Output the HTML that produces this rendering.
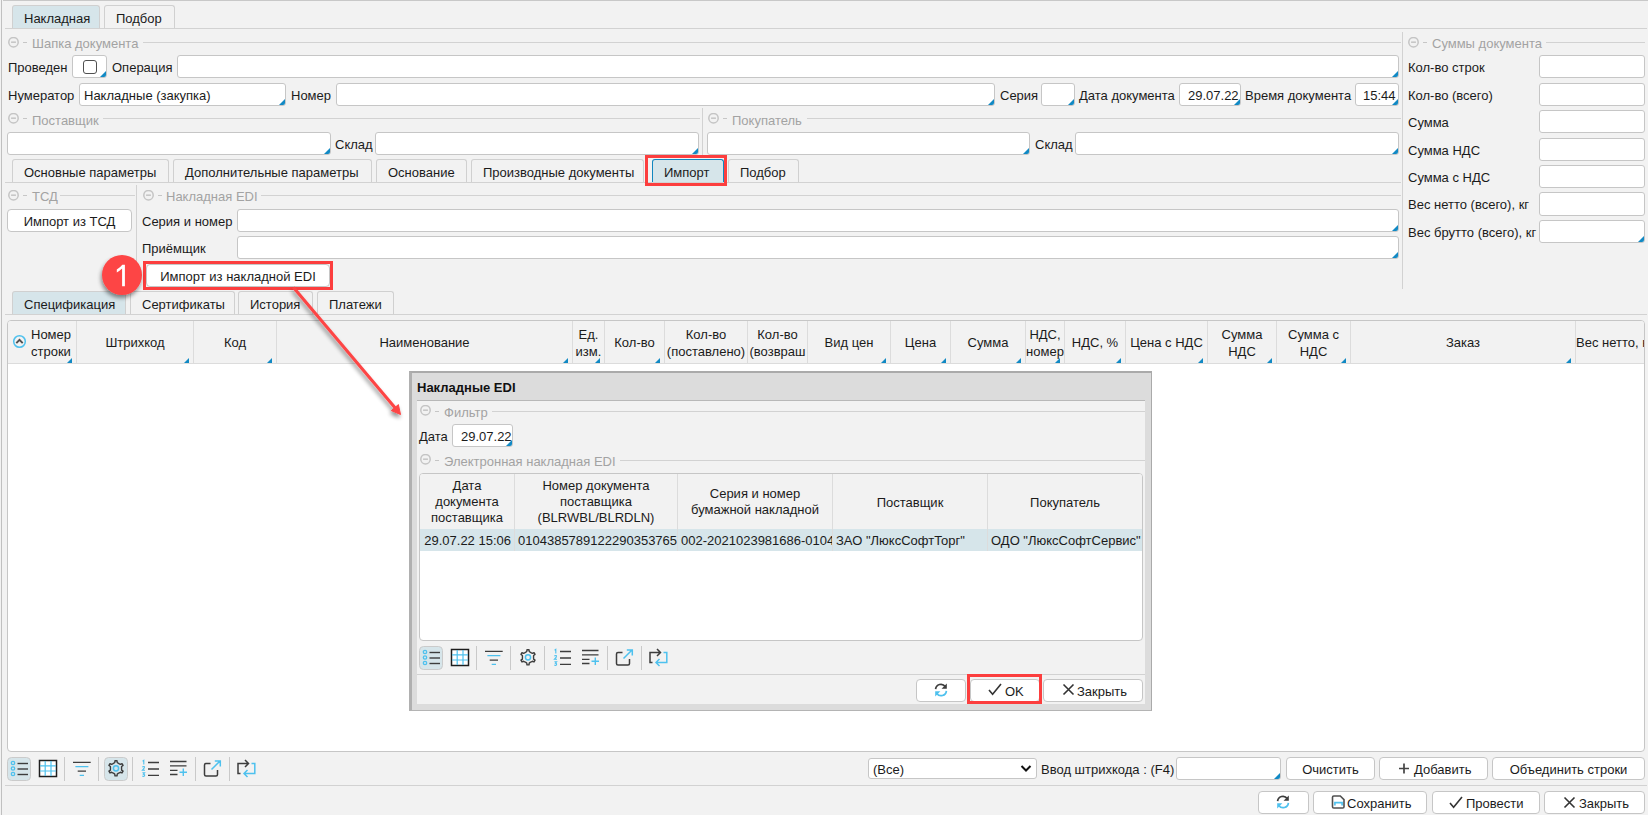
<!DOCTYPE html>
<html><head><meta charset="utf-8">
<style>
*{margin:0;padding:0;box-sizing:border-box}
html,body{width:1648px;height:815px;overflow:hidden;background:#f2f2f2;position:relative;font-family:"Liberation Sans",sans-serif;font-size:13px;color:#1b1b1b}
.a{position:absolute}
.t{position:absolute;white-space:nowrap;line-height:15px;font-size:13px}
.g{color:#a3a3a3}
.hl{position:absolute;height:1px;background:#d2d2d2}
.vl{position:absolute;width:1px;background:#d2d2d2}
.in{position:absolute;background:#fff;border:1px solid #c6c6c6;border-radius:3px;height:23px;overflow:hidden}
.c::after{content:"";position:absolute;right:0;bottom:0;width:0;height:0;border-style:solid;border-width:0 0 6px 6px;border-color:transparent transparent #1189c4 transparent}
.tab{position:absolute;border:1px solid #d0d0d0;border-bottom:none;border-radius:3px 3px 0 0;background:#f2f2f2;height:24px}
.tab.on{background:#d6e5ea}
.tab span{position:absolute;top:5px;left:11px;white-space:nowrap;line-height:15px}
.btn{position:absolute;background:#fff;border:1px solid #c6c6c6;border-radius:4px;height:23px;text-align:center;line-height:23px;white-space:nowrap}
.ico{position:absolute;width:11px;height:11px;border:1.6px solid #c4c4c4;border-radius:50%}
.ico::after{content:"";position:absolute;left:1.5px;top:3.1px;width:4.8px;height:1.6px;background:#c4c4c4}
.dash{position:absolute;width:4px;height:1px;background:#c6c6c6}
.red{position:absolute;border:3px solid #fc3e3e}
.gh{position:absolute;text-align:center;line-height:17px;white-space:nowrap;overflow:hidden}
.tri{position:absolute;width:0;height:0;border-style:solid;border-width:0 0 5px 5px;border-color:transparent transparent #1189c4 transparent}
.gh>div{display:flex;justify-content:safe center;padding:0 2px}
.mh{position:absolute;text-align:center;line-height:16px;white-space:nowrap}
.mc{position:absolute;top:59px;line-height:15px;white-space:nowrap;overflow:hidden;padding-left:3px}
.cn::after{content:"";position:absolute;right:1px;bottom:0;width:0;height:0;border-style:solid;border-width:0 0 5px 5px;border-color:transparent transparent #1189c4 transparent}
</style></head><body>
<!-- frame -->
<div class="a" style="left:1px;top:0;width:1px;height:815px;background:#c0c0c0"></div>
<div class="a" style="left:3px;top:0;width:1645px;height:1px;background:#c8c8c8"></div>

<!-- top tabs -->
<div class="tab on" style="left:12px;top:5px;width:88px"><span>Накладная</span></div>
<div class="tab" style="left:104px;top:5px;width:71px"><span>Подбор</span></div>
<div class="hl" style="left:5px;top:28px;width:1642px"></div>

<!-- header section -->
<svg class="a" style="left:8px;top:37px" width="12" height="12" viewBox="0 0 12 12"><circle cx="5.5" cy="5.2" r="4.7" fill="none" stroke="#c4c4c4" stroke-width="1.5"/><path d="M3.1,5.2H7.9" stroke="#c4c4c4" stroke-width="1.5"/></svg><div class="dash" style="left:23px;top:42px"></div>
<div class="t g" style="left:32px;top:36px">Шапка документа</div>
<div class="hl" style="left:143px;top:42px;width:1258px"></div>
<div class="vl" style="left:1402px;top:32px;height:257px"></div>

<div class="t" style="left:8px;top:60px">Проведен</div>
<div class="in c" style="left:72px;top:55px;width:35px"><div class="a" style="left:10px;top:4px;width:14px;height:14px;border:1.4px solid #505050;border-radius:3px"></div></div>
<div class="t" style="left:112px;top:60px">Операция</div>
<div class="in c" style="left:177px;top:55px;width:1222px"></div>

<div class="t" style="left:8px;top:88px">Нумератор</div>
<div class="in c" style="left:79px;top:83px;width:207px"><div class="t" style="left:4px;top:4px">Накладные (закупка)</div></div>
<div class="t" style="left:291px;top:88px">Номер</div>
<div class="in c" style="left:336px;top:83px;width:659px"></div>
<div class="t" style="left:1000px;top:88px">Серия</div>
<div class="in c" style="left:1041px;top:83px;width:34px"></div>
<div class="t" style="left:1079px;top:88px">Дата документа</div>
<div class="in c" style="left:1179px;top:83px;width:62px"><div class="t" style="left:8px;top:4px">29.07.22</div></div>
<div class="t" style="left:1245px;top:88px">Время документа</div>
<div class="in c" style="left:1355px;top:83px;width:44px"><div class="t" style="left:7px;top:4px">15:44</div></div>

<!-- supplier / buyer -->
<svg class="a" style="left:8px;top:113px" width="12" height="12" viewBox="0 0 12 12"><circle cx="5.5" cy="5.2" r="4.7" fill="none" stroke="#c4c4c4" stroke-width="1.5"/><path d="M3.1,5.2H7.9" stroke="#c4c4c4" stroke-width="1.5"/></svg><div class="dash" style="left:23px;top:118px"></div>
<div class="t g" style="left:32px;top:113px">Поставщик</div>
<div class="hl" style="left:103px;top:118px;width:597px"></div>
<div class="vl" style="left:702px;top:108px;height:47px"></div>
<svg class="a" style="left:708px;top:113px" width="12" height="12" viewBox="0 0 12 12"><circle cx="5.5" cy="5.2" r="4.7" fill="none" stroke="#c4c4c4" stroke-width="1.5"/><path d="M3.1,5.2H7.9" stroke="#c4c4c4" stroke-width="1.5"/></svg><div class="dash" style="left:723px;top:118px"></div>
<div class="t g" style="left:732px;top:113px">Покупатель</div>
<div class="hl" style="left:807px;top:118px;width:594px"></div>

<div class="in c" style="left:7px;top:132px;width:324px"></div>
<div class="t" style="left:335px;top:137px">Склад</div>
<div class="in c" style="left:375px;top:132px;width:324px"></div>
<div class="in c" style="left:707px;top:132px;width:323px"></div>
<div class="t" style="left:1035px;top:137px">Склад</div>
<div class="in c" style="left:1075px;top:132px;width:324px"></div>

<!-- inner tabs -->
<div class="tab" style="left:12px;top:159px;height:23px;width:157px"><span>Основные параметры</span></div>
<div class="tab" style="left:173px;top:159px;height:23px;width:199px"><span>Дополнительные параметры</span></div>
<div class="tab" style="left:376px;top:159px;height:23px;width:91px"><span>Основание</span></div>
<div class="tab" style="left:471px;top:159px;height:23px;width:173px"><span>Производные документы</span></div>
<div class="tab on" style="left:652px;top:159px;height:24px;width:72px;border-color:#1187bf"><span style="left:11px">Импорт</span></div>
<div class="tab" style="left:728px;top:159px;height:23px;width:71px"><span>Подбор</span></div>
<div class="hl" style="left:5px;top:182px;width:1396px"></div>
<div class="red" style="left:645px;top:155px;width:82px;height:31px"></div>

<!-- TSD / EDI -->
<svg class="a" style="left:8px;top:190px" width="12" height="12" viewBox="0 0 12 12"><circle cx="5.5" cy="5.2" r="4.7" fill="none" stroke="#c4c4c4" stroke-width="1.5"/><path d="M3.1,5.2H7.9" stroke="#c4c4c4" stroke-width="1.5"/></svg><div class="dash" style="left:23px;top:195px"></div>
<div class="t g" style="left:32px;top:189px">ТСД</div>
<div class="hl" style="left:60px;top:195px;width:75px"></div>
<div class="vl" style="left:136px;top:185px;height:104px"></div>
<svg class="a" style="left:143px;top:190px" width="12" height="12" viewBox="0 0 12 12"><circle cx="5.5" cy="5.2" r="4.7" fill="none" stroke="#c4c4c4" stroke-width="1.5"/><path d="M3.1,5.2H7.9" stroke="#c4c4c4" stroke-width="1.5"/></svg><div class="dash" style="left:158px;top:195px"></div>
<div class="t g" style="left:166px;top:189px">Накладная EDI</div>
<div class="hl" style="left:261px;top:195px;width:1140px"></div>

<div class="btn" style="left:7px;top:209px;width:125px">Импорт из ТСД</div>
<div class="t" style="left:142px;top:214px">Серия и номер</div>
<div class="in c" style="left:237px;top:209px;width:1162px"></div>
<div class="t" style="left:142px;top:241px">Приёмщик</div>
<div class="in c" style="left:237px;top:236px;width:1162px"></div>
<div class="btn" style="left:146px;top:264px;width:184px">Импорт из накладной EDI</div>
<div class="red" style="left:143px;top:261px;width:190px;height:29px"></div>

<!-- right panel -->
<svg class="a" style="left:1408px;top:37px" width="12" height="12" viewBox="0 0 12 12"><circle cx="5.5" cy="5.2" r="4.7" fill="none" stroke="#c4c4c4" stroke-width="1.5"/><path d="M3.1,5.2H7.9" stroke="#c4c4c4" stroke-width="1.5"/></svg><div class="dash" style="left:1423px;top:42px"></div>
<div class="t g" style="left:1432px;top:36px">Суммы документа</div>
<div class="hl" style="left:1546px;top:42px;width:99px"></div>
<div class="t" style="left:1408px;top:60px">Кол-во строк</div>
<div class="in" style="left:1539px;top:55px;width:106px"></div>
<div class="t" style="left:1408px;top:88px">Кол-во (всего)</div>
<div class="in" style="left:1539px;top:83px;width:106px"></div>
<div class="t" style="left:1408px;top:115px">Сумма</div>
<div class="in" style="left:1539px;top:110px;width:106px"></div>
<div class="t" style="left:1408px;top:143px">Сумма НДС</div>
<div class="in" style="left:1539px;top:138px;width:106px"></div>
<div class="t" style="left:1408px;top:170px">Сумма с НДС</div>
<div class="in" style="left:1539px;top:165px;width:106px"></div>
<div class="t" style="left:1408px;top:197px">Вес нетто (всего), кг</div>
<div class="in" style="left:1539px;top:192px;width:106px;height:24px"></div>
<div class="t" style="left:1408px;top:225px">Вес брутто (всего), кг</div>
<div class="in c" style="left:1539px;top:220px;width:106px"></div>

<!-- bottom tabs -->
<div class="tab on" style="left:12px;top:291px;width:114px"><span>Спецификация</span></div>
<div class="tab" style="left:130px;top:291px;width:105px"><span>Сертификаты</span></div>
<div class="tab" style="left:238px;top:291px;width:75px"><span>История</span></div>
<div class="tab" style="left:317px;top:291px;width:77px"><span>Платежи</span></div>
<div class="hl" style="left:5px;top:314px;width:1642px"></div>


<!-- main grid -->
<div class="a" style="left:7px;top:320px;width:1638px;height:432px;border:1px solid #c6c6c6;border-radius:4px;background:#fff;overflow:hidden">
<div class="a" style="left:0;top:0;width:1636px;height:43px;background:#f2f2f2;border-bottom:1px solid #dcdcdc"></div>
</div>
<div class="a" style="left:76px;top:321px;width:1px;height:42px;background:#dcdcdc"></div><div class="tri" style="left:67px;top:358px"></div><div class="gh" style="left:31px;top:326px;width:45px;text-align:left">Номер<br>строки</div><div class="a" style="left:193px;top:321px;width:1px;height:42px;background:#dcdcdc"></div><div class="tri" style="left:184px;top:358px"></div><div class="gh" style="left:77px;top:334px;width:116px">Штрихкод</div><div class="a" style="left:276px;top:321px;width:1px;height:42px;background:#dcdcdc"></div><div class="tri" style="left:267px;top:358px"></div><div class="gh" style="left:194px;top:334px;width:82px">Код</div><div class="a" style="left:572px;top:321px;width:1px;height:42px;background:#dcdcdc"></div><div class="tri" style="left:563px;top:358px"></div><div class="gh" style="left:277px;top:334px;width:295px">Наименование</div><div class="a" style="left:604px;top:321px;width:1px;height:42px;background:#dcdcdc"></div><div class="tri" style="left:595px;top:358px"></div><div class="gh" style="left:573px;top:326px;width:31px">Ед.<br>изм.</div><div class="a" style="left:664px;top:321px;width:1px;height:42px;background:#dcdcdc"></div><div class="tri" style="left:655px;top:358px"></div><div class="gh" style="left:605px;top:334px;width:59px">Кол-во</div><div class="a" style="left:747px;top:321px;width:1px;height:42px;background:#dcdcdc"></div><div class="gh" style="left:665px;top:326px;width:82px">Кол-во<br>(поставлено)</div><div class="a" style="left:807px;top:321px;width:1px;height:42px;background:#dcdcdc"></div><div class="gh" style="left:748px;top:326px;width:59px">Кол-во<br>(возвраш</div><div class="a" style="left:890px;top:321px;width:1px;height:42px;background:#dcdcdc"></div><div class="tri" style="left:881px;top:358px"></div><div class="gh" style="left:808px;top:334px;width:82px">Вид цен</div><div class="a" style="left:950px;top:321px;width:1px;height:42px;background:#dcdcdc"></div><div class="tri" style="left:941px;top:358px"></div><div class="gh" style="left:891px;top:334px;width:59px">Цена</div><div class="a" style="left:1025px;top:321px;width:1px;height:42px;background:#dcdcdc"></div><div class="tri" style="left:1016px;top:358px"></div><div class="gh" style="left:951px;top:334px;width:74px">Сумма</div><div class="a" style="left:1064px;top:321px;width:1px;height:42px;background:#dcdcdc"></div><div class="tri" style="left:1055px;top:358px"></div><div class="gh" style="left:1026px;top:326px;width:38px">НДС,<br>номер</div><div class="a" style="left:1125px;top:321px;width:1px;height:42px;background:#dcdcdc"></div><div class="tri" style="left:1116px;top:358px"></div><div class="gh" style="left:1065px;top:334px;width:60px">НДС, %</div><div class="a" style="left:1207px;top:321px;width:1px;height:42px;background:#dcdcdc"></div><div class="tri" style="left:1198px;top:358px"></div><div class="gh" style="left:1126px;top:334px;width:81px">Цена с НДС</div><div class="a" style="left:1276px;top:321px;width:1px;height:42px;background:#dcdcdc"></div><div class="tri" style="left:1267px;top:358px"></div><div class="gh" style="left:1208px;top:326px;width:68px">Сумма<br>НДС</div><div class="a" style="left:1350px;top:321px;width:1px;height:42px;background:#dcdcdc"></div><div class="tri" style="left:1341px;top:358px"></div><div class="gh" style="left:1277px;top:326px;width:73px">Сумма с<br>НДС</div><div class="a" style="left:1575px;top:321px;width:1px;height:42px;background:#dcdcdc"></div><div class="tri" style="left:1566px;top:358px"></div><div class="gh" style="left:1351px;top:334px;width:224px">Заказ</div><div class="gh" style="left:1576px;top:334px;width:68px">Вес нетто, кг</div>
<svg class="a" style="left:12px;top:334px" width="15" height="15" viewBox="0 0 15 15"><circle cx="7.5" cy="7.5" r="5.8" fill="none" stroke="#4ec1ee" stroke-width="1.5"/><path d="M4.3,9.2L7.5,5.8L10.7,9.2" fill="none" stroke="#505050" stroke-width="1.9"/></svg>

<!-- toolbar -->
<svg class="a" style="left:0px;top:753px" width="262" height="30" viewBox="0 0 262 30"><rect x="7.5" y="4.5" width="23" height="23" rx="4" fill="#d6e5ea" stroke="#cbcbcb"/><circle cx="13" cy="10" r="1.7" fill="none" stroke="#4ec1ee" stroke-width="1.3"/><line x1="17.5" y1="10.5" x2="28" y2="10.5" stroke="#3d3d3d" stroke-width="1.4"/><circle cx="13" cy="15.5" r="1.7" fill="none" stroke="#4ec1ee" stroke-width="1.3"/><line x1="17.5" y1="16.0" x2="28" y2="16.0" stroke="#3d3d3d" stroke-width="1.4"/><circle cx="13" cy="21" r="1.7" fill="none" stroke="#4ec1ee" stroke-width="1.3"/><line x1="17.5" y1="21.5" x2="28" y2="21.5" stroke="#3d3d3d" stroke-width="1.4"/><rect x="39.5" y="7.5" width="17" height="16" fill="#fff" stroke="#1e1e1e" stroke-width="1.5"/><path d="M45.2,8V23M51,8V23M40,12.8H56M40,18H56" stroke="#4ec1ee" stroke-width="1.2"/><line x1="64.5" y1="4" x2="64.5" y2="28" stroke="#c9c9c9" stroke-width="1"/><line x1="98.5" y1="4" x2="98.5" y2="28" stroke="#c9c9c9" stroke-width="1"/><line x1="132.5" y1="4" x2="132.5" y2="28" stroke="#c9c9c9" stroke-width="1"/><line x1="195.5" y1="4" x2="195.5" y2="28" stroke="#c9c9c9" stroke-width="1"/><line x1="229.5" y1="4" x2="229.5" y2="28" stroke="#c9c9c9" stroke-width="1"/><path d="M73,9.3H90.7M77.7,18.2H86" stroke="#3d3d3d" stroke-width="1.3"/><path d="M75.4,13.7H88.4M79.7,22.4H84" stroke="#4ec1ee" stroke-width="1.3"/><rect x="104.5" y="4.5" width="23" height="23" rx="4" fill="#d6e5ea" stroke="#cbcbcb"/><path d="M113.83,10.14 L114.77,9.53 L114.97,7.77 L117.03,7.77 L117.23,9.53 L118.17,10.14 L119.39,10.84 L120.38,11.35 L122.01,10.64 L123.04,12.43 L121.61,13.48 L121.56,14.60 L121.56,16.00 L121.61,17.12 L123.04,18.17 L122.01,19.96 L120.38,19.25 L119.39,19.76 L118.17,20.46 L117.23,21.07 L117.03,22.83 L114.97,22.83 L114.77,21.07 L113.83,20.46 L112.61,19.76 L111.62,19.25 L109.99,19.96 L108.96,18.17 L110.39,17.12 L110.44,16.00 L110.44,14.60 L110.39,13.48 L108.96,12.43 L109.99,10.64 L111.62,11.35 L112.61,10.84Z" fill="none" stroke="#3d3d3d" stroke-width="1.4" stroke-linejoin="round"/><circle cx="116" cy="15.3" r="2.6" fill="none" stroke="#4ec1ee" stroke-width="1.5"/><path d="M148,9.5H159M148,16H159M148,22.3H159" stroke="#3d3d3d" stroke-width="1.3"/><path d="M142.6,8.2L143.8,7.3V11.6M142.3,14.2Q143.4,13 144.5,13.8Q144.8,14.8 142.5,17.2H145M142.4,19.8H144.6L143.4,21.2Q145.2,21.6 144.4,23.1Q143.4,23.7 142.3,23" fill="none" stroke="#4ec1ee" stroke-width="1.1"/><path d="M170,8.5H186.5M170,12.8H186.5M170,17.3H177.5M170,21.5H177.5" stroke="#3d3d3d" stroke-width="1.3"/><path d="M179.5,19.3H187M183.3,15.5V23" stroke="#4ec1ee" stroke-width="1.4"/><path d="M210.5,10.5H206Q204.5,10.5 204.5,12V21.5Q204.5,23 206,23H216Q217.5,23 217.5,21.5V17" fill="none" stroke="#3d3d3d" stroke-width="1.5"/><path d="M211.5,16.5L220,8M214.8,8H220.3V13.5" fill="none" stroke="#4ec1ee" stroke-width="1.5"/><path d="M240.5,20.5H238V10.5H248.5M245,7L248.5,10.5L245,14" fill="none" stroke="#3d3d3d" stroke-width="1.5"/><path d="M251.5,10.5H254.8V20.5H244M247.5,17L244,20.5L247.5,24" fill="none" stroke="#4ec1ee" stroke-width="1.5"/></svg>
<div class="a" style="left:868px;top:758px;width:169px;height:21px;background:#fff;border:1px solid #c6c6c6;border-radius:3px"><div class="t" style="left:4px;top:3px">(Все)</div><svg class="a" style="left:151px;top:5px" width="12" height="9" viewBox="0 0 12 9"><path d="M1.5,2L6,6.5L10.5,2" fill="none" stroke="#111" stroke-width="2"/></svg></div>
<div class="t" style="left:1041px;top:762px">Ввод штрихкода : (F4)</div>
<div class="in c" style="left:1176px;top:757px;width:105px;height:23px"></div>
<div class="btn" style="left:1286px;top:757px;width:89px">Очистить</div>
<div class="btn" style="left:1379px;top:757px;width:109px;text-align:left;padding-left:34px">Добавить</div><svg class="a" style="left:1398px;top:763px" width="12" height="12" viewBox="0 0 12 12"><path d="M1,5.5H11M6,0.5V10.5" stroke="#444" stroke-width="1.7"/></svg>
<div class="btn" style="left:1492px;top:757px;width:153px">Объединить строки</div>
<div class="hl" style="left:5px;top:785px;width:1642px"></div>

<!-- bottom buttons -->
<div class="btn" style="left:1258px;top:791px;width:51px"></div>
<svg class="a" style="left:1275px;top:794px" width="16" height="16" viewBox="0 0 16 16"><path d="M2.6,7.2A5.3,5.3 0 0 1 12.2,4.6" fill="none" stroke="#3d3d3d" stroke-width="1.7"/><path d="M13.8,1.5V6.8H8.6Z" fill="#3d3d3d"/><path d="M13.4,8.8A5.3,5.3 0 0 1 3.8,11.4" fill="none" stroke="#4ec1ee" stroke-width="1.7"/><path d="M2.2,14.5V9.2H7.4Z" fill="#4ec1ee"/></svg>
<div class="btn" style="left:1313px;top:791px;width:114px;text-align:left;padding-left:33px">Сохранить</div>
<svg class="a" style="left:1331px;top:794px" width="15" height="16" viewBox="0 0 15 16"><path d="M2.8,2H9.3L13,5.7V12.7Q13,14 11.7,14H2.8Q1.5,14 1.5,12.7V3.3Q1.5,2 2.8,2Z" fill="none" stroke="#505050" stroke-width="1.6"/><path d="M3.9,11.6V8.6H11.1V11.6" fill="none" stroke="#4ec1ee" stroke-width="1.6"/></svg>
<div class="btn" style="left:1432px;top:791px;width:108px;text-align:left;padding-left:33px">Провести</div>
<svg class="a" style="left:1449px;top:796px" width="14" height="13" viewBox="0 0 14 13"><path d="M1,7L4.6,11.2L13,1" fill="none" stroke="#333" stroke-width="1.6"/></svg>
<div class="btn" style="left:1544px;top:791px;width:101px;text-align:left;padding-left:34px">Закрыть</div>
<svg class="a" style="left:1563px;top:796px" width="13" height="13" viewBox="0 0 13 13"><path d="M1.5,1.5L11.5,11.5M11.5,1.5L1.5,11.5" fill="none" stroke="#333" stroke-width="1.6"/></svg>

<!-- modal -->
<div class="a" style="left:409px;top:371px;width:743px;height:340px;background:#dcdcdc;border-left:3px solid #b0b0b0;border-top:2px solid #aaaaaa;border-right:1px solid #aaaaaa;border-bottom:1px solid #b4b4b4"></div>
<div class="t" style="left:417px;top:380px;font-weight:bold;color:#111">Накладные EDI</div>
<div class="a" style="left:417px;top:400px;width:728px;height:304px;background:#f2f2f2;border-top:1px solid #b8b8b8"></div>
<svg class="a" style="left:420px;top:405px" width="12" height="12" viewBox="0 0 12 12"><circle cx="5.5" cy="5.2" r="4.7" fill="none" stroke="#c4c4c4" stroke-width="1.5"/><path d="M3.1,5.2H7.9" stroke="#c4c4c4" stroke-width="1.5"/></svg><div class="dash" style="left:435px;top:411px"></div>
<div class="t g" style="left:444px;top:405px">Фильтр</div>
<div class="hl" style="left:492px;top:411px;width:653px"></div>
<div class="t" style="left:419px;top:429px">Дата</div>
<div class="in c" style="left:452px;top:424px;width:61px"><div class="t" style="left:8px;top:4px">29.07.22</div></div>
<svg class="a" style="left:420px;top:454px" width="12" height="12" viewBox="0 0 12 12"><circle cx="5.5" cy="5.2" r="4.7" fill="none" stroke="#c4c4c4" stroke-width="1.5"/><path d="M3.1,5.2H7.9" stroke="#c4c4c4" stroke-width="1.5"/></svg><div class="dash" style="left:435px;top:460px"></div>
<div class="t g" style="left:444px;top:454px">Электронная накладная EDI</div>
<div class="hl" style="left:620px;top:460px;width:525px"></div>

<div class="a" style="left:419px;top:473px;width:724px;height:168px;border:1px solid #c6c6c6;border-radius:4px;background:#fff;overflow:hidden">
 <div class="a" style="left:0;top:0;width:722px;height:55px;background:#f2f2f2"></div>
 <div class="a" style="left:0;top:55px;width:722px;height:22px;background:#d6e5ea"></div>
 <div class="a" style="left:94px;top:0;width:1px;height:77px;background:#dcdcdc"></div>
 <div class="a" style="left:257px;top:0;width:1px;height:77px;background:#dcdcdc"></div>
 <div class="a" style="left:412px;top:0;width:1px;height:77px;background:#dcdcdc"></div>
 <div class="a" style="left:567px;top:0;width:1px;height:77px;background:#dcdcdc"></div>
 <div class="mh" style="left:0;top:4px;width:94px">Дата<br>документа<br>поставщика</div>
 <div class="mh" style="left:95px;top:4px;width:162px">Номер документа<br>поставщика<br>(BLRWBL/BLRDLN)</div>
 <div class="mh" style="left:258px;top:12px;width:154px">Серия и номер<br>бумажной накладной</div>
 <div class="mh" style="left:413px;top:21px;width:154px">Поставщик</div>
 <div class="mh" style="left:568px;top:21px;width:154px">Покупатель</div>
 <div class="mc" style="left:0;width:94px;text-align:right;padding-right:3px">29.07.22 15:06</div>
 <div class="mc" style="left:95px;width:162px">010438578912229035376543</div>
 <div class="mc" style="left:258px;width:154px">002-2021023981686-010438</div>
 <div class="mc" style="left:413px;width:154px">ЗАО "ЛюксСофтТорг"</div>
 <div class="mc" style="left:568px;width:154px">ОДО "ЛюксСофтСервис"</div>
</div>
<svg class="a" style="left:412px;top:642px" width="262" height="30" viewBox="0 0 262 30"><rect x="7.5" y="4.5" width="23" height="23" rx="4" fill="#d6e5ea" stroke="#cbcbcb"/><circle cx="13" cy="10" r="1.7" fill="none" stroke="#4ec1ee" stroke-width="1.3"/><line x1="17.5" y1="10.5" x2="28" y2="10.5" stroke="#3d3d3d" stroke-width="1.4"/><circle cx="13" cy="15.5" r="1.7" fill="none" stroke="#4ec1ee" stroke-width="1.3"/><line x1="17.5" y1="16.0" x2="28" y2="16.0" stroke="#3d3d3d" stroke-width="1.4"/><circle cx="13" cy="21" r="1.7" fill="none" stroke="#4ec1ee" stroke-width="1.3"/><line x1="17.5" y1="21.5" x2="28" y2="21.5" stroke="#3d3d3d" stroke-width="1.4"/><rect x="39.5" y="7.5" width="17" height="16" fill="#fff" stroke="#1e1e1e" stroke-width="1.5"/><path d="M45.2,8V23M51,8V23M40,12.8H56M40,18H56" stroke="#4ec1ee" stroke-width="1.2"/><line x1="64.5" y1="4" x2="64.5" y2="28" stroke="#c9c9c9" stroke-width="1"/><line x1="98.5" y1="4" x2="98.5" y2="28" stroke="#c9c9c9" stroke-width="1"/><line x1="132.5" y1="4" x2="132.5" y2="28" stroke="#c9c9c9" stroke-width="1"/><line x1="195.5" y1="4" x2="195.5" y2="28" stroke="#c9c9c9" stroke-width="1"/><line x1="229.5" y1="4" x2="229.5" y2="28" stroke="#c9c9c9" stroke-width="1"/><path d="M73,9.3H90.7M77.7,18.2H86" stroke="#3d3d3d" stroke-width="1.3"/><path d="M75.4,13.7H88.4M79.7,22.4H84" stroke="#4ec1ee" stroke-width="1.3"/><path d="M113.83,10.14 L114.77,9.53 L114.97,7.77 L117.03,7.77 L117.23,9.53 L118.17,10.14 L119.39,10.84 L120.38,11.35 L122.01,10.64 L123.04,12.43 L121.61,13.48 L121.56,14.60 L121.56,16.00 L121.61,17.12 L123.04,18.17 L122.01,19.96 L120.38,19.25 L119.39,19.76 L118.17,20.46 L117.23,21.07 L117.03,22.83 L114.97,22.83 L114.77,21.07 L113.83,20.46 L112.61,19.76 L111.62,19.25 L109.99,19.96 L108.96,18.17 L110.39,17.12 L110.44,16.00 L110.44,14.60 L110.39,13.48 L108.96,12.43 L109.99,10.64 L111.62,11.35 L112.61,10.84Z" fill="none" stroke="#3d3d3d" stroke-width="1.4" stroke-linejoin="round"/><circle cx="116" cy="15.3" r="2.6" fill="none" stroke="#4ec1ee" stroke-width="1.5"/><path d="M148,9.5H159M148,16H159M148,22.3H159" stroke="#3d3d3d" stroke-width="1.3"/><path d="M142.6,8.2L143.8,7.3V11.6M142.3,14.2Q143.4,13 144.5,13.8Q144.8,14.8 142.5,17.2H145M142.4,19.8H144.6L143.4,21.2Q145.2,21.6 144.4,23.1Q143.4,23.7 142.3,23" fill="none" stroke="#4ec1ee" stroke-width="1.1"/><path d="M170,8.5H186.5M170,12.8H186.5M170,17.3H177.5M170,21.5H177.5" stroke="#3d3d3d" stroke-width="1.3"/><path d="M179.5,19.3H187M183.3,15.5V23" stroke="#4ec1ee" stroke-width="1.4"/><path d="M210.5,10.5H206Q204.5,10.5 204.5,12V21.5Q204.5,23 206,23H216Q217.5,23 217.5,21.5V17" fill="none" stroke="#3d3d3d" stroke-width="1.5"/><path d="M211.5,16.5L220,8M214.8,8H220.3V13.5" fill="none" stroke="#4ec1ee" stroke-width="1.5"/><path d="M240.5,20.5H238V10.5H248.5M245,7L248.5,10.5L245,14" fill="none" stroke="#3d3d3d" stroke-width="1.5"/><path d="M251.5,10.5H254.8V20.5H244M247.5,17L244,20.5L247.5,24" fill="none" stroke="#4ec1ee" stroke-width="1.5"/></svg>
<div class="hl" style="left:417px;top:674px;width:728px"></div>
<div class="btn" style="left:916px;top:679px;width:50px"></div>
<svg class="a" style="left:933px;top:682px" width="16" height="16" viewBox="0 0 16 16"><path d="M2.6,7.2A5.3,5.3 0 0 1 12.2,4.6" fill="none" stroke="#3d3d3d" stroke-width="1.7"/><path d="M13.8,1.5V6.8H8.6Z" fill="#3d3d3d"/><path d="M13.4,8.8A5.3,5.3 0 0 1 3.8,11.4" fill="none" stroke="#4ec1ee" stroke-width="1.7"/><path d="M2.2,14.5V9.2H7.4Z" fill="#4ec1ee"/></svg>
<div class="btn" style="left:970px;top:679px;width:70px;text-align:left;padding-left:34px">OK</div>
<svg class="a" style="left:988px;top:683px" width="14" height="13" viewBox="0 0 14 13"><path d="M1,7L4.6,11.2L13,1" fill="none" stroke="#333" stroke-width="1.6"/></svg>
<div class="red" style="left:967px;top:674px;width:75px;height:30px"></div>
<div class="btn" style="left:1043px;top:679px;width:100px;text-align:left;padding-left:33px">Закрыть</div>
<svg class="a" style="left:1062px;top:683px" width="13" height="13" viewBox="0 0 13 13"><path d="M1.5,1.5L11.5,11.5M11.5,1.5L1.5,11.5" fill="none" stroke="#333" stroke-width="1.6"/></svg>

<!-- annotations -->
<svg class="a" style="left:0;top:0;overflow:visible" width="1648" height="815">
 <defs><filter id="sh" x="-50%" y="-50%" width="200%" height="200%"><feGaussianBlur in="SourceAlpha" stdDeviation="2.2"/><feOffset dx="-1" dy="3" result="b"/><feComponentTransfer><feFuncA type="linear" slope="0.45"/></feComponentTransfer><feMerge><feMergeNode/><feMergeNode in="SourceGraphic"/></feMerge></filter></defs>
 <g filter="url(#sh)">
  <path d="M293.5,287.5L396.5,409.5" stroke="#fd4545" stroke-width="3.1" fill="none"/>
  <path d="M400.5,414.5L391.3,410.6L398.4,404.6Z" fill="#fd4545" stroke="#fd4545" stroke-width="1" stroke-linejoin="round"/>
 </g>
 <g filter="url(#sh)">
  <circle cx="122" cy="275" r="20" fill="#fd4545"/>
 </g>
</svg>
<svg class="a" style="left:0;top:0" width="200" height="300" viewBox="0 0 200 300"><path d="M122.3,264.8H124.9V286.2H122.1V268.6Q119.8,270.9 116.8,272.4V269.6Q120,267.8 122.3,264.8Z" fill="#fff"/></svg>

</body></html>
